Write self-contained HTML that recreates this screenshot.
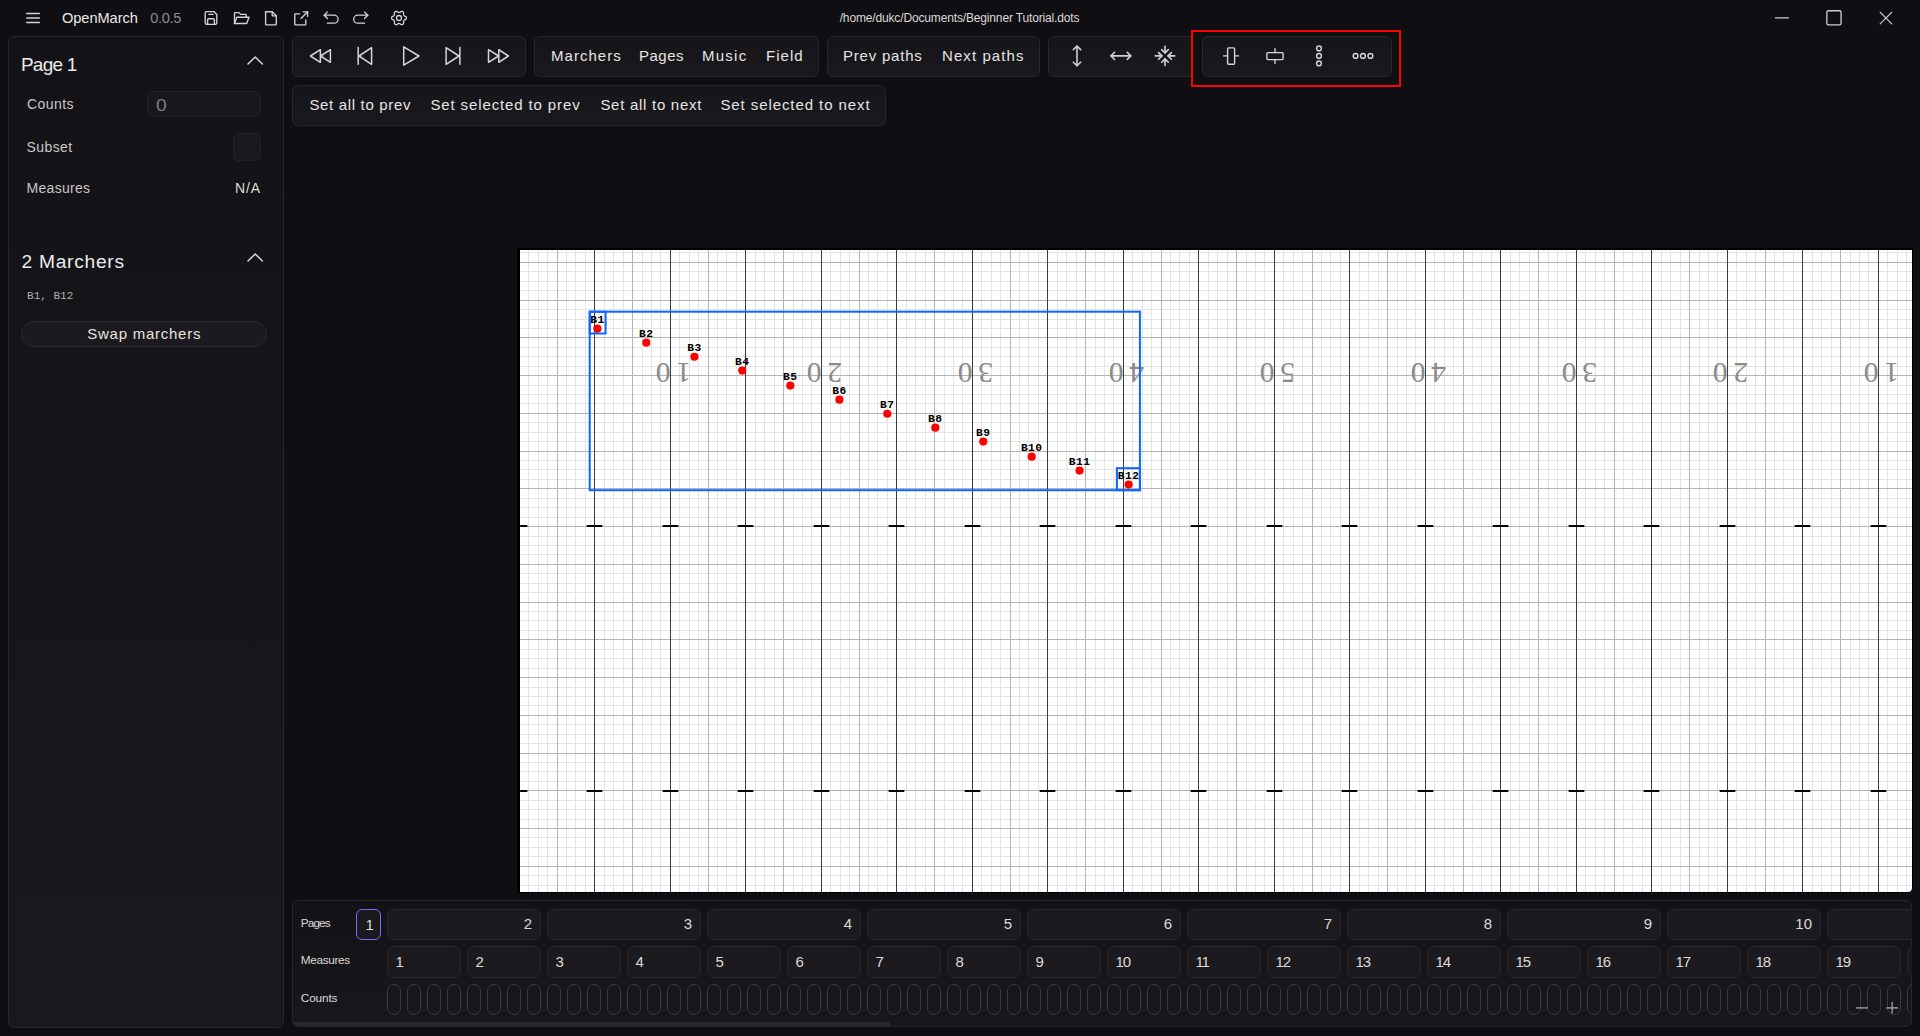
<!DOCTYPE html>
<html><head><meta charset="utf-8">
<style>
*{box-sizing:border-box;margin:0;padding:0}
html,body{width:1920px;height:1036px;overflow:hidden;background:#0f0e13;font-family:"Liberation Sans",sans-serif;color:#e9e7e4}
.abs{position:absolute}
.t{position:absolute;white-space:nowrap;line-height:1}
.panel{position:absolute;background:#16151a;border:1px solid #27262b;border-radius:6px}
svg{position:absolute;overflow:visible}
.ic{fill:none;stroke:#d4d4d4;stroke-width:1.5;stroke-linecap:round;stroke-linejoin:round}
.box{position:absolute;background:#1c1b20;border:1px solid #2a292e;border-radius:6px}
.pill{position:absolute;width:14px;height:30px;border:1px solid #3a393e;border-radius:7px}
</style></head><body>
<svg class="ic" style="left:25px;top:12px;" width="16" height="13" viewBox="0 0 16 13"><path d="M1.8 1.5H14.3M1.8 6.0H14.3M1.8 10.6H14.3"/></svg>
<div class="t" style="left:62.00px;top:10.84px;font-size:14.6px;color:#ebe9e6;letter-spacing:-0.05px;">OpenMarch</div>
<div class="t" style="left:150.20px;top:10.84px;font-size:14.6px;color:#8b8a8f;letter-spacing:-0.35px;">0.0.5</div>
<svg class="ic" style="left:203px;top:10px;stroke-width:1.35" width="16" height="16" viewBox="0 0 16 16"><path d="M2.2 3.2Q2.2 1.6 3.8 1.6H10.9L13.8 4.5V12.8Q13.8 14.4 12.2 14.4H3.8Q2.2 14.4 2.2 12.8Z"/><path d="M4.6 14.2V9.8Q4.6 8.7 5.7 8.7H10.3Q11.4 8.7 11.4 9.8V14.2"/><path d="M5.8 4.3H10.2"/></svg>
<svg class="ic" style="left:233px;top:10px;stroke-width:1.35" width="17" height="16" viewBox="0 0 17 16"><path d="M1.5 13.5V3.2Q1.5 2.6 2.1 2.6H6L7.6 4.4H12.6Q13.2 4.4 13.2 5V7"/><path d="M1.5 13.5L3.8 7.2H16L13.7 13.5Z"/></svg>
<svg class="ic" style="left:263px;top:10px;stroke-width:1.35" width="16" height="16" viewBox="0 0 16 16"><path d="M2.6 1.7H9.2L13.3 5.8V14.3Q13.3 14.9 12.7 14.9H3.2Q2.6 14.9 2.6 14.3Z"/><path d="M9.2 1.7V5.8H13.3"/></svg>
<svg class="ic" style="left:293px;top:10px;stroke-width:1.35" width="16" height="16" viewBox="0 0 16 16"><path d="M6.6 3.8H2.4Q1.8 3.8 1.8 4.4V14.2Q1.8 14.8 2.4 14.8H12.2Q12.8 14.8 12.8 14.2V10"/><path d="M14.6 1.8L8 8.4"/><path d="M10.2 1.8H14.6V6.2"/></svg>
<svg class="ic" style="left:322px;top:10px;stroke-width:1.3" width="17" height="16" viewBox="0 0 17 16"><path d="M5.4 1.9L2.2 5.2L5.4 8.5"/><path d="M2.2 5.2H12.1A4 4 0 0 1 12.1 13.2H5.4"/></svg>
<svg class="ic" style="left:352px;top:10px;stroke-width:1.3" width="17" height="16" viewBox="0 0 17 16"><path d="M12.5 1.9L15.8 5.2L12.5 8.5"/><path d="M15.8 5.2H5.7A4 4 0 0 0 5.7 13.2H12.6"/></svg>
<svg class="ic" style="left:391px;top:10px;stroke-width:1.3" width="16" height="16" viewBox="0 0 16 16"><path d="M15.40 8.00 L15.39 8.19 L15.36 8.39 L15.32 8.58 L15.26 8.76 L15.17 8.94 L15.07 9.12 L14.95 9.29 L14.80 9.44 L14.60 9.59 L14.23 9.67 L13.86 9.73 L13.66 9.84 L13.50 9.95 L13.36 10.06 L13.23 10.17 L13.12 10.28 L13.02 10.39 L12.92 10.51 L12.84 10.63 L12.76 10.75 L12.70 10.88 L12.63 11.01 L12.58 11.15 L12.53 11.29 L12.49 11.45 L12.46 11.61 L12.44 11.79 L12.42 11.98 L12.43 12.20 L12.56 12.56 L12.68 12.93 L12.65 13.16 L12.59 13.37 L12.51 13.56 L12.40 13.74 L12.29 13.90 L12.16 14.05 L12.02 14.18 L11.86 14.30 L11.70 14.41 L11.53 14.50 L11.35 14.57 L11.16 14.63 L10.97 14.66 L10.77 14.68 L10.57 14.68 L10.36 14.66 L10.15 14.61 L9.93 14.51 L9.67 14.23 L9.43 13.94 L9.24 13.82 L9.06 13.74 L8.90 13.67 L8.74 13.62 L8.59 13.57 L8.44 13.54 L8.29 13.52 L8.14 13.50 L8.00 13.50 L7.86 13.50 L7.71 13.52 L7.56 13.54 L7.41 13.57 L7.26 13.62 L7.10 13.67 L6.94 13.74 L6.76 13.82 L6.57 13.94 L6.33 14.23 L6.07 14.51 L5.85 14.61 L5.64 14.66 L5.43 14.68 L5.23 14.68 L5.03 14.66 L4.84 14.63 L4.65 14.57 L4.47 14.50 L4.30 14.41 L4.14 14.30 L3.98 14.18 L3.84 14.05 L3.71 13.90 L3.60 13.74 L3.49 13.56 L3.41 13.37 L3.35 13.16 L3.32 12.93 L3.44 12.56 L3.57 12.20 L3.58 11.98 L3.56 11.79 L3.54 11.61 L3.51 11.45 L3.47 11.29 L3.42 11.15 L3.37 11.01 L3.30 10.88 L3.24 10.75 L3.16 10.63 L3.08 10.51 L2.98 10.39 L2.88 10.28 L2.77 10.17 L2.64 10.06 L2.50 9.95 L2.34 9.84 L2.14 9.73 L1.77 9.67 L1.40 9.59 L1.20 9.44 L1.05 9.29 L0.93 9.12 L0.83 8.94 L0.74 8.76 L0.68 8.58 L0.64 8.39 L0.61 8.19 L0.60 8.00 L0.61 7.81 L0.64 7.61 L0.68 7.42 L0.74 7.24 L0.83 7.06 L0.93 6.88 L1.05 6.71 L1.20 6.56 L1.40 6.41 L1.77 6.33 L2.14 6.27 L2.34 6.16 L2.50 6.05 L2.64 5.94 L2.77 5.83 L2.88 5.72 L2.98 5.61 L3.08 5.49 L3.16 5.37 L3.24 5.25 L3.30 5.12 L3.37 4.99 L3.42 4.85 L3.47 4.71 L3.51 4.55 L3.54 4.39 L3.56 4.21 L3.58 4.02 L3.57 3.80 L3.44 3.44 L3.32 3.07 L3.35 2.84 L3.41 2.63 L3.49 2.44 L3.60 2.26 L3.71 2.10 L3.84 1.95 L3.98 1.82 L4.14 1.70 L4.30 1.59 L4.47 1.50 L4.65 1.43 L4.84 1.37 L5.03 1.34 L5.23 1.32 L5.43 1.32 L5.64 1.34 L5.85 1.39 L6.07 1.49 L6.33 1.77 L6.57 2.06 L6.76 2.18 L6.94 2.26 L7.10 2.33 L7.26 2.38 L7.41 2.43 L7.56 2.46 L7.71 2.48 L7.86 2.50 L8.00 2.50 L8.14 2.50 L8.29 2.48 L8.44 2.46 L8.59 2.43 L8.74 2.38 L8.90 2.33 L9.06 2.26 L9.24 2.18 L9.43 2.06 L9.67 1.77 L9.93 1.49 L10.15 1.39 L10.36 1.34 L10.57 1.32 L10.77 1.32 L10.97 1.34 L11.16 1.37 L11.35 1.43 L11.53 1.50 L11.70 1.59 L11.86 1.70 L12.02 1.82 L12.16 1.95 L12.29 2.10 L12.40 2.26 L12.51 2.44 L12.59 2.63 L12.65 2.84 L12.68 3.07 L12.56 3.44 L12.43 3.80 L12.42 4.02 L12.44 4.21 L12.46 4.39 L12.49 4.55 L12.53 4.71 L12.58 4.85 L12.63 4.99 L12.70 5.12 L12.76 5.25 L12.84 5.37 L12.92 5.49 L13.02 5.61 L13.12 5.72 L13.23 5.83 L13.36 5.94 L13.50 6.05 L13.66 6.16 L13.86 6.27 L14.23 6.33 L14.60 6.41 L14.80 6.56 L14.95 6.71 L15.07 6.88 L15.17 7.06 L15.26 7.24 L15.32 7.42 L15.36 7.61 L15.39 7.81Z"/><circle cx="8" cy="8" r="2.5"/></svg>
<div class="t" style="left:839.70px;top:11.74px;font-size:12px;color:#dcdad7;letter-spacing:-0.15px;">/home/dukc/Documents/Beginner Tutorial.dots</div>
<svg class="ic" style="left:1770px;top:10px;stroke:#cfcfcf;stroke-width:1.2" width="24" height="16" viewBox="0 0 24 16"><path d="M5.3 7.8H18.6"/></svg>
<svg class="ic" style="left:1822px;top:6px;stroke:#cfcfcf;stroke-width:1.3" width="24" height="24" viewBox="0 0 24 24"><rect x="4.85" y="4.75" width="14.2" height="14.1" rx="1.6"/></svg>
<svg class="ic" style="left:1874px;top:6px;stroke:#d0d0d0;stroke-width:1.1" width="24" height="24" viewBox="0 0 24 24"><path d="M6.15 6.25L17.75 17.85M17.75 6.25L6.15 17.85"/></svg>
<div class="panel" style="left:8px;top:36px;width:276px;height:992px;background:linear-gradient(#131217,#19181d)"></div>
<div class="t" style="left:20.90px;top:54.92px;font-size:19px;color:#ecebe8;letter-spacing:-0.75px;">Page 1</div>
<svg class="ic" style="left:247px;top:55px;stroke:#d8d8d8;stroke-width:1.5" width="17" height="11" viewBox="0 0 17 10"><path d="M1 8.5L8.2 1.5L15.4 8.5"/></svg>
<div class="t" style="left:27.00px;top:96.95px;font-size:14px;color:#c9c7c4;letter-spacing:0.45px;">Counts</div>
<div class="abs" style="left:146.8px;top:90.8px;width:114px;height:26.2px;background:#18171c;border:1px solid #222126;border-radius:5px"></div>
<div class="t" style="left:156.3px;top:97.5px;font-size:16px;color:#7d7c80;transform:scaleX(1.2);transform-origin:0 0">0</div>
<div class="t" style="left:26.60px;top:140.45px;font-size:14px;color:#c9c7c4;letter-spacing:0.4px;">Subset</div>
<div class="abs" style="left:233px;top:133.2px;width:27.8px;height:27.6px;background:#1a191e;border:1px solid #222126;border-radius:5px"></div>
<div class="t" style="left:26.60px;top:180.85px;font-size:14px;color:#c9c7c4;letter-spacing:0.28px;">Measures</div>
<div class="t" style="right:1659.00px;top:180.85px;font-size:14px;color:#dedcd9;letter-spacing:0.9px;">N/A</div>
<div class="t" style="left:21.40px;top:251.85px;font-size:19.2px;color:#ecebe8;letter-spacing:0.75px;">2 Marchers</div>
<svg class="ic" style="left:247px;top:252px;stroke:#d8d8d8;stroke-width:1.5" width="17" height="11" viewBox="0 0 17 10"><path d="M1 8.5L8.2 1.5L15.4 8.5"/></svg>
<div class="t" style="left:27.1px;top:291px;font-family:'Liberation Mono',monospace;font-size:11px;color:#b4b2af">B1, B12</div>
<div class="abs" style="left:21.3px;top:321.1px;width:245.5px;height:25.8px;background:#1b1a1f;border:1px solid #2b2a2f;border-radius:13px"></div>
<div class="t" style="left:144.20px;top:325.80px;font-size:15px;color:#e6e4e1;letter-spacing:0.75px;transform:translateX(-50%);">Swap marchers</div>
<div class="panel" style="left:292.3px;top:36.1px;width:233.7px;height:40.699999999999996px;background:linear-gradient(#16151a,#19181d)"></div>
<div class="panel" style="left:534.1px;top:36.1px;width:284.5px;height:40.699999999999996px;background:linear-gradient(#16151a,#19181d)"></div>
<div class="panel" style="left:826.9px;top:36.1px;width:212.80000000000007px;height:40.699999999999996px;background:linear-gradient(#16151a,#19181d)"></div>
<div class="panel" style="left:1048.3px;top:36.1px;width:144.7px;height:40.7px;background:linear-gradient(#16151a,#19181d);border-radius:6px 2px 2px 6px"></div>
<div class="panel" style="left:1202.4px;top:36.1px;width:189.69999999999982px;height:40.699999999999996px;background:linear-gradient(#16151a,#19181d)"></div>
<div class="panel" style="left:292.3px;top:85.2px;width:593.9000000000001px;height:40.39999999999999px;background:linear-gradient(#16151a,#19181d)"></div>
<svg class="ic" style="left:0;top:0;stroke:#d6d6d6;stroke-width:1.5" width="1920" height="130" viewBox="0 0 1920 130"><path d="M310.4 56L320.4 49.7V62.3Z"/><path d="M320.6 56L330.4 49.7V62.3Z"/><path d="M358.2 47.4V64.3"/><path d="M359 56L371.6 47.7V64.3Z"/><path d="M403.7 46.9V65.2L419 56Z"/><path d="M446.1 47.7V64.3L459 56Z"/><path d="M459.9 47.4V64.3"/><path d="M488.5 49.7V62.3L498.6 56Z"/><path d="M498.8 49.7V62.3L508.4 56Z"/></svg>
<svg class="ic" style="left:0;top:0;stroke:#d2d2d2;stroke-width:1.6" width="1920" height="130" viewBox="0 0 1920 130"><path d="M1077 46.2V65.6"/><path d="M1073.4 49.6L1077 46L1080.6 49.6"/><path d="M1073.4 62.2L1077 65.8L1080.6 62.2"/><path d="M1111.2 55.9H1130.6"/><path d="M1114.6 52.3L1111 55.9L1114.6 59.5"/><path d="M1127.2 52.3L1130.8 55.9L1127.2 59.5"/><path d="M1165 46.2V52.8"/><path d="M1161.7 49.6L1165 52.9L1168.3 49.6"/><path d="M1165 65.6V59"/><path d="M1161.7 62.2L1165 58.9L1168.3 62.2"/><path d="M1155.3 55.9H1161.9"/><path d="M1158.6 52.6L1161.9 55.9L1158.6 59.2"/><path d="M1174.7 55.9H1168.1"/><path d="M1171.4 52.6L1168.1 55.9L1171.4 59.2"/></svg>
<svg class="ic" style="left:0;top:0;stroke:#d6d6d6;stroke-width:1.4" width="1920" height="130" viewBox="0 0 1920 130"><rect x="1227.6" y="47.9" width="7" height="16.4" rx="1"/><path d="M1223.6 55.9H1227.6M1234.6 55.9H1238.6"/><rect x="1266.9" y="52.6" width="16.2" height="7" rx="1"/><path d="M1275 48.6V52.6M1275 59.6V63.6"/><circle cx="1319" cy="48.4" r="2.4"/><circle cx="1319" cy="55.9" r="2.4"/><circle cx="1319" cy="63.4" r="2.4"/><circle cx="1355.6" cy="55.9" r="2.4"/><circle cx="1363" cy="55.9" r="2.4"/><circle cx="1370.4" cy="55.9" r="2.4"/></svg>
<div class="t" style="left:551.00px;top:48.30px;font-size:15px;color:#e6e4e1;letter-spacing:1.04px;">Marchers</div>
<div class="t" style="left:639.00px;top:48.30px;font-size:15px;color:#e6e4e1;letter-spacing:0.5px;">Pages</div>
<div class="t" style="left:702.00px;top:48.30px;font-size:15px;color:#e6e4e1;letter-spacing:1.25px;">Music</div>
<div class="t" style="left:766.00px;top:48.30px;font-size:15px;color:#e6e4e1;letter-spacing:1.05px;">Field</div>
<div class="t" style="left:843.00px;top:48.30px;font-size:15px;color:#e6e4e1;letter-spacing:0.79px;">Prev paths</div>
<div class="t" style="left:942.00px;top:48.30px;font-size:15px;color:#e6e4e1;letter-spacing:1.08px;">Next paths</div>
<div class="t" style="left:309.40px;top:97.20px;font-size:15px;color:#e6e4e1;letter-spacing:0.67px;">Set all to prev</div>
<div class="t" style="left:430.40px;top:97.20px;font-size:15px;color:#e6e4e1;letter-spacing:0.88px;">Set selected to prev</div>
<div class="t" style="left:600.40px;top:97.20px;font-size:15px;color:#e6e4e1;letter-spacing:0.72px;">Set all to next</div>
<div class="t" style="left:720.40px;top:97.20px;font-size:15px;color:#e6e4e1;letter-spacing:0.92px;">Set selected to next</div>
<div class="abs" style="left:517px;top:248px;width:1396px;height:645px;overflow:hidden;border-radius:0 0 6px 0"><svg style="left:0;top:0" width="1396" height="645" viewBox="0 0 1396 645"><rect x="0" y="0" width="1396" height="645" fill="#000"/><path d="M3 2H1395V639.5Q1395 644 1390.5 644H3Z" fill="#fff"/><path d="M11.5 2V644M21.5 2V644M30.5 2V644M49.5 2V644M58.5 2V644M68.5 2V644M87.5 2V644M96.5 2V644M106.5 2V644M125.5 2V644M134.5 2V644M143.5 2V644M162.5 2V644M172.5 2V644M181.5 2V644M200.5 2V644M209.5 2V644M219.5 2V644M238.5 2V644M247.5 2V644M257.5 2V644M276.5 2V644M285.5 2V644M294.5 2V644M313.5 2V644M323.5 2V644M332.5 2V644M351.5 2V644M360.5 2V644M370.5 2V644M389.5 2V644M398.5 2V644M408.5 2V644M427.5 2V644M436.5 2V644M445.5 2V644M464.5 2V644M474.5 2V644M483.5 2V644M502.5 2V644M511.5 2V644M521.5 2V644M540.5 2V644M549.5 2V644M559.5 2V644M578.5 2V644M587.5 2V644M596.5 2V644M615.5 2V644M625.5 2V644M634.5 2V644M653.5 2V644M662.5 2V644M672.5 2V644M691.5 2V644M700.5 2V644M710.5 2V644M729.5 2V644M738.5 2V644M747.5 2V644M766.5 2V644M776.5 2V644M785.5 2V644M804.5 2V644M813.5 2V644M823.5 2V644M842.5 2V644M851.5 2V644M861.5 2V644M880.5 2V644M889.5 2V644M898.5 2V644M917.5 2V644M927.5 2V644M936.5 2V644M955.5 2V644M964.5 2V644M974.5 2V644M993.5 2V644M1002.5 2V644M1012.5 2V644M1031.5 2V644M1040.5 2V644M1049.5 2V644M1068.5 2V644M1078.5 2V644M1087.5 2V644M1106.5 2V644M1115.5 2V644M1125.5 2V644M1144.5 2V644M1153.5 2V644M1163.5 2V644M1182.5 2V644M1191.5 2V644M1200.5 2V644M1219.5 2V644M1229.5 2V644M1238.5 2V644M1257.5 2V644M1266.5 2V644M1276.5 2V644M1295.5 2V644M1304.5 2V644M1314.5 2V644M1333.5 2V644M1342.5 2V644M1351.5 2V644M1370.5 2V644M1380.5 2V644M1389.5 2V644M3 4.5H1395M3 23.5H1395M3 33.5H1395M3 42.5H1395M3 61.5H1395M3 71.5H1395M3 80.5H1395M3 99.5H1395M3 108.5H1395M3 118.5H1395M3 137.5H1395M3 146.5H1395M3 155.5H1395M3 174.5H1395M3 184.5H1395M3 193.5H1395M3 212.5H1395M3 221.5H1395M3 231.5H1395M3 250.5H1395M3 259.5H1395M3 269.5H1395M3 288.5H1395M3 297.5H1395M3 306.5H1395M3 325.5H1395M3 335.5H1395M3 344.5H1395M3 363.5H1395M3 372.5H1395M3 382.5H1395M3 401.5H1395M3 410.5H1395M3 420.5H1395M3 439.5H1395M3 448.5H1395M3 457.5H1395M3 476.5H1395M3 486.5H1395M3 495.5H1395M3 514.5H1395M3 523.5H1395M3 533.5H1395M3 552.5H1395M3 561.5H1395M3 571.5H1395M3 589.5H1395M3 599.5H1395M3 608.5H1395M3 627.5H1395M3 637.5H1395" stroke="#e4e4e4" stroke-width="1.0" fill="none" shape-rendering="crispEdges"/><path d="M40.5 2V644M115.5 2V644M191.5 2V644M266.5 2V644M342.5 2V644M417.5 2V644M493.5 2V644M568.5 2V644M644.5 2V644M719.5 2V644M795.5 2V644M870.5 2V644M946.5 2V644M1021.5 2V644M1097.5 2V644M1172.5 2V644M1248.5 2V644M1323.5 2V644M3 14.5H1395M3 52.5H1395M3 89.5H1395M3 127.5H1395M3 165.5H1395M3 203.5H1395M3 240.5H1395M3 278.5H1395M3 316.5H1395M3 354.5H1395M3 391.5H1395M3 429.5H1395M3 467.5H1395M3 505.5H1395M3 542.5H1395M3 580.5H1395M3 618.5H1395" stroke="#b4b4b4" stroke-width="1.0" fill="none" shape-rendering="crispEdges"/><path d="M77.5 2V644M153.5 2V644M228.5 2V644M304.5 2V644M379.5 2V644M455.5 2V644M530.5 2V644M606.5 2V644M681.5 2V644M757.5 2V644M832.5 2V644M908.5 2V644M983.5 2V644M1059.5 2V644M1134.5 2V644M1210.5 2V644M1285.5 2V644M1361.5 2V644" stroke="#3c3c3c" stroke-width="1.0" fill="none" shape-rendering="crispEdges"/><rect x="3.0" y="277" width="7.5" height="2" rx="0.8" fill="#000"/><rect x="3.0" y="542" width="7.5" height="2" rx="0.8" fill="#000"/><rect x="69.5" y="277" width="16.0" height="2" rx="0.8" fill="#000"/><rect x="69.5" y="542" width="16.0" height="2" rx="0.8" fill="#000"/><rect x="145.5" y="277" width="16.0" height="2" rx="0.8" fill="#000"/><rect x="145.5" y="542" width="16.0" height="2" rx="0.8" fill="#000"/><rect x="220.5" y="277" width="16.0" height="2" rx="0.8" fill="#000"/><rect x="220.5" y="542" width="16.0" height="2" rx="0.8" fill="#000"/><rect x="296.5" y="277" width="16.0" height="2" rx="0.8" fill="#000"/><rect x="296.5" y="542" width="16.0" height="2" rx="0.8" fill="#000"/><rect x="371.5" y="277" width="16.0" height="2" rx="0.8" fill="#000"/><rect x="371.5" y="542" width="16.0" height="2" rx="0.8" fill="#000"/><rect x="447.5" y="277" width="16.0" height="2" rx="0.8" fill="#000"/><rect x="447.5" y="542" width="16.0" height="2" rx="0.8" fill="#000"/><rect x="522.5" y="277" width="16.0" height="2" rx="0.8" fill="#000"/><rect x="522.5" y="542" width="16.0" height="2" rx="0.8" fill="#000"/><rect x="598.5" y="277" width="16.0" height="2" rx="0.8" fill="#000"/><rect x="598.5" y="542" width="16.0" height="2" rx="0.8" fill="#000"/><rect x="673.5" y="277" width="16.0" height="2" rx="0.8" fill="#000"/><rect x="673.5" y="542" width="16.0" height="2" rx="0.8" fill="#000"/><rect x="749.5" y="277" width="16.0" height="2" rx="0.8" fill="#000"/><rect x="749.5" y="542" width="16.0" height="2" rx="0.8" fill="#000"/><rect x="824.5" y="277" width="16.0" height="2" rx="0.8" fill="#000"/><rect x="824.5" y="542" width="16.0" height="2" rx="0.8" fill="#000"/><rect x="900.5" y="277" width="16.0" height="2" rx="0.8" fill="#000"/><rect x="900.5" y="542" width="16.0" height="2" rx="0.8" fill="#000"/><rect x="975.5" y="277" width="16.0" height="2" rx="0.8" fill="#000"/><rect x="975.5" y="542" width="16.0" height="2" rx="0.8" fill="#000"/><rect x="1051.5" y="277" width="16.0" height="2" rx="0.8" fill="#000"/><rect x="1051.5" y="542" width="16.0" height="2" rx="0.8" fill="#000"/><rect x="1126.5" y="277" width="16.0" height="2" rx="0.8" fill="#000"/><rect x="1126.5" y="542" width="16.0" height="2" rx="0.8" fill="#000"/><rect x="1202.5" y="277" width="16.0" height="2" rx="0.8" fill="#000"/><rect x="1202.5" y="542" width="16.0" height="2" rx="0.8" fill="#000"/><rect x="1277.5" y="277" width="16.0" height="2" rx="0.8" fill="#000"/><rect x="1277.5" y="542" width="16.0" height="2" rx="0.8" fill="#000"/><rect x="1353.5" y="277" width="16.0" height="2" rx="0.8" fill="#000"/><rect x="1353.5" y="542" width="16.0" height="2" rx="0.8" fill="#000"/><text x="166.54" y="124.85" transform="rotate(180 166.54 124.85)" font-family="Liberation Serif" font-size="29.5" fill="#8a8a8a" text-anchor="middle" dy="0.3375em">1</text><text x="146.14" y="124.85" transform="rotate(180 146.14 124.85)" font-family="Liberation Serif" font-size="29.5" fill="#8a8a8a" text-anchor="middle" dy="0.3375em">0</text><text x="317.54" y="124.85" transform="rotate(180 317.54 124.85)" font-family="Liberation Serif" font-size="29.5" fill="#8a8a8a" text-anchor="middle" dy="0.3375em">2</text><text x="297.14" y="124.85" transform="rotate(180 297.14 124.85)" font-family="Liberation Serif" font-size="29.5" fill="#8a8a8a" text-anchor="middle" dy="0.3375em">0</text><text x="468.54" y="124.85" transform="rotate(180 468.54 124.85)" font-family="Liberation Serif" font-size="29.5" fill="#8a8a8a" text-anchor="middle" dy="0.3375em">3</text><text x="448.14" y="124.85" transform="rotate(180 448.14 124.85)" font-family="Liberation Serif" font-size="29.5" fill="#8a8a8a" text-anchor="middle" dy="0.3375em">0</text><text x="619.54" y="124.85" transform="rotate(180 619.54 124.85)" font-family="Liberation Serif" font-size="29.5" fill="#8a8a8a" text-anchor="middle" dy="0.3375em">4</text><text x="599.14" y="124.85" transform="rotate(180 599.14 124.85)" font-family="Liberation Serif" font-size="29.5" fill="#8a8a8a" text-anchor="middle" dy="0.3375em">0</text><text x="770.54" y="124.85" transform="rotate(180 770.54 124.85)" font-family="Liberation Serif" font-size="29.5" fill="#8a8a8a" text-anchor="middle" dy="0.3375em">5</text><text x="750.14" y="124.85" transform="rotate(180 750.14 124.85)" font-family="Liberation Serif" font-size="29.5" fill="#8a8a8a" text-anchor="middle" dy="0.3375em">0</text><text x="921.54" y="124.85" transform="rotate(180 921.54 124.85)" font-family="Liberation Serif" font-size="29.5" fill="#8a8a8a" text-anchor="middle" dy="0.3375em">4</text><text x="901.14" y="124.85" transform="rotate(180 901.14 124.85)" font-family="Liberation Serif" font-size="29.5" fill="#8a8a8a" text-anchor="middle" dy="0.3375em">0</text><text x="1072.54" y="124.85" transform="rotate(180 1072.54 124.85)" font-family="Liberation Serif" font-size="29.5" fill="#8a8a8a" text-anchor="middle" dy="0.3375em">3</text><text x="1052.14" y="124.85" transform="rotate(180 1052.14 124.85)" font-family="Liberation Serif" font-size="29.5" fill="#8a8a8a" text-anchor="middle" dy="0.3375em">0</text><text x="1223.54" y="124.85" transform="rotate(180 1223.54 124.85)" font-family="Liberation Serif" font-size="29.5" fill="#8a8a8a" text-anchor="middle" dy="0.3375em">2</text><text x="1203.14" y="124.85" transform="rotate(180 1203.14 124.85)" font-family="Liberation Serif" font-size="29.5" fill="#8a8a8a" text-anchor="middle" dy="0.3375em">0</text><text x="1374.54" y="124.85" transform="rotate(180 1374.54 124.85)" font-family="Liberation Serif" font-size="29.5" fill="#8a8a8a" text-anchor="middle" dy="0.3375em">1</text><text x="1354.14" y="124.85" transform="rotate(180 1354.14 124.85)" font-family="Liberation Serif" font-size="29.5" fill="#8a8a8a" text-anchor="middle" dy="0.3375em">0</text><text x="80.40" y="75.10" font-family="Liberation Mono" font-weight="bold" font-size="11.3" letter-spacing="0.4" fill="#000" text-anchor="middle">B1</text><circle cx="80.40" cy="80.70" r="4.1" fill="#ff0000"/><text x="129.30" y="89.10" font-family="Liberation Mono" font-weight="bold" font-size="11.3" letter-spacing="0.4" fill="#000" text-anchor="middle">B2</text><circle cx="129.30" cy="94.70" r="4.1" fill="#ff0000"/><text x="177.40" y="103.15" font-family="Liberation Mono" font-weight="bold" font-size="11.3" letter-spacing="0.4" fill="#000" text-anchor="middle">B3</text><circle cx="177.40" cy="108.75" r="4.1" fill="#ff0000"/><text x="225.20" y="117.00" font-family="Liberation Mono" font-weight="bold" font-size="11.3" letter-spacing="0.4" fill="#000" text-anchor="middle">B4</text><circle cx="225.20" cy="122.60" r="4.1" fill="#ff0000"/><text x="273.30" y="132.00" font-family="Liberation Mono" font-weight="bold" font-size="11.3" letter-spacing="0.4" fill="#000" text-anchor="middle">B5</text><circle cx="273.30" cy="137.60" r="4.1" fill="#ff0000"/><text x="322.40" y="146.10" font-family="Liberation Mono" font-weight="bold" font-size="11.3" letter-spacing="0.4" fill="#000" text-anchor="middle">B6</text><circle cx="322.40" cy="151.70" r="4.1" fill="#ff0000"/><text x="370.30" y="160.15" font-family="Liberation Mono" font-weight="bold" font-size="11.3" letter-spacing="0.4" fill="#000" text-anchor="middle">B7</text><circle cx="370.30" cy="165.75" r="4.1" fill="#ff0000"/><text x="418.30" y="174.10" font-family="Liberation Mono" font-weight="bold" font-size="11.3" letter-spacing="0.4" fill="#000" text-anchor="middle">B8</text><circle cx="418.30" cy="179.70" r="4.1" fill="#ff0000"/><text x="466.25" y="188.00" font-family="Liberation Mono" font-weight="bold" font-size="11.3" letter-spacing="0.4" fill="#000" text-anchor="middle">B9</text><circle cx="466.25" cy="193.60" r="4.1" fill="#ff0000"/><text x="514.70" y="203.10" font-family="Liberation Mono" font-weight="bold" font-size="11.3" letter-spacing="0.4" fill="#000" text-anchor="middle">B10</text><circle cx="514.70" cy="208.70" r="4.1" fill="#ff0000"/><text x="562.60" y="217.00" font-family="Liberation Mono" font-weight="bold" font-size="11.3" letter-spacing="0.4" fill="#000" text-anchor="middle">B11</text><circle cx="562.60" cy="222.60" r="4.1" fill="#ff0000"/><text x="611.60" y="231.00" font-family="Liberation Mono" font-weight="bold" font-size="11.3" letter-spacing="0.4" fill="#000" text-anchor="middle">B12</text><circle cx="611.60" cy="236.60" r="4.1" fill="#ff0000"/><rect x="72.70" y="63.70" width="550.20" height="178.50" fill="none" stroke="#0a66ff" stroke-width="2"/><rect x="72.70" y="63.70" width="15.90" height="21.80" fill="none" stroke="#0a66ff" stroke-width="2"/><rect x="599.90" y="220.20" width="23.00" height="22.00" fill="none" stroke="#0a66ff" stroke-width="2"/></svg></div>
<div class="panel" style="left:292.4px;top:900px;width:1619.4px;height:127.3px;background:linear-gradient(#131217,#18171c);overflow:hidden"><div class="abs" style="left:0;bottom:0;width:597px;height:4.5px;background:#2a292e;border-radius:0 3px 0 6px"></div></div>
<div class="t" style="left:300.80px;top:918.31px;font-size:11.8px;color:#dcdad7;letter-spacing:-0.9px;">Pages</div>
<div class="t" style="left:300.80px;top:955.41px;font-size:11.8px;color:#dcdad7;letter-spacing:-0.34px;">Measures</div>
<div class="t" style="left:300.80px;top:993.31px;font-size:11.8px;color:#dcdad7;letter-spacing:-0.14px;">Counts</div>
<div class="abs" style="left:292.4px;top:900px;width:1619.4px;height:127.3px;overflow:hidden;border-radius:6px"><div class="abs" style="left:63.6px;top:9.0px;width:25px;height:31px;background:#1a191e;border:1.5px solid #7b6cf2;border-radius:6px"></div><div class="t" style="left:73.2px;top:16.9px;font-size:15px;color:#e0dedb">1</div><div class="abs" style="left:94.9px;top:9.0px;width:153.7px;height:31px;background:#1b1a1f;border:1px solid #29282d;border-radius:7px"></div><div class="t" style="right:1379.8px;top:16.2px;font-size:15px;color:#dedcd9">2</div><div class="abs" style="left:254.9px;top:9.0px;width:153.7px;height:31px;background:#1b1a1f;border:1px solid #29282d;border-radius:7px"></div><div class="t" style="right:1219.8px;top:16.2px;font-size:15px;color:#dedcd9">3</div><div class="abs" style="left:414.9px;top:9.0px;width:153.7px;height:31px;background:#1b1a1f;border:1px solid #29282d;border-radius:7px"></div><div class="t" style="right:1059.8px;top:16.2px;font-size:15px;color:#dedcd9">4</div><div class="abs" style="left:574.9px;top:9.0px;width:153.7px;height:31px;background:#1b1a1f;border:1px solid #29282d;border-radius:7px"></div><div class="t" style="right:899.8px;top:16.2px;font-size:15px;color:#dedcd9">5</div><div class="abs" style="left:734.9px;top:9.0px;width:153.7px;height:31px;background:#1b1a1f;border:1px solid #29282d;border-radius:7px"></div><div class="t" style="right:739.8px;top:16.2px;font-size:15px;color:#dedcd9">6</div><div class="abs" style="left:894.9px;top:9.0px;width:153.7px;height:31px;background:#1b1a1f;border:1px solid #29282d;border-radius:7px"></div><div class="t" style="right:579.8px;top:16.2px;font-size:15px;color:#dedcd9">7</div><div class="abs" style="left:1054.9px;top:9.0px;width:153.7px;height:31px;background:#1b1a1f;border:1px solid #29282d;border-radius:7px"></div><div class="t" style="right:419.8px;top:16.2px;font-size:15px;color:#dedcd9">8</div><div class="abs" style="left:1214.9px;top:9.0px;width:153.7px;height:31px;background:#1b1a1f;border:1px solid #29282d;border-radius:7px"></div><div class="t" style="right:259.8px;top:16.2px;font-size:15px;color:#dedcd9">9</div><div class="abs" style="left:1374.9px;top:9.0px;width:153.7px;height:31px;background:#1b1a1f;border:1px solid #29282d;border-radius:7px"></div><div class="t" style="right:99.8px;top:16.2px;font-size:15px;color:#dedcd9">10</div><div class="abs" style="left:1534.9px;top:9.0px;width:153.7px;height:31px;background:#1b1a1f;border:1px solid #29282d;border-radius:7px"></div><div class="t" style="right:-60.2px;top:16.2px;font-size:15px;color:#dedcd9">11</div><div class="abs" style="left:94.9px;top:46.3px;width:73.6px;height:32px;background:#1b1a1f;border:1px solid #29282d;border-radius:7px"></div><div class="t" style="left:103.0px;top:54.2px;font-size:15px;letter-spacing:-1px;color:#dedcd9">1</div><div class="abs" style="left:174.9px;top:46.3px;width:73.6px;height:32px;background:#1b1a1f;border:1px solid #29282d;border-radius:7px"></div><div class="t" style="left:183.0px;top:54.2px;font-size:15px;letter-spacing:-1px;color:#dedcd9">2</div><div class="abs" style="left:254.9px;top:46.3px;width:73.6px;height:32px;background:#1b1a1f;border:1px solid #29282d;border-radius:7px"></div><div class="t" style="left:263.0px;top:54.2px;font-size:15px;letter-spacing:-1px;color:#dedcd9">3</div><div class="abs" style="left:334.9px;top:46.3px;width:73.6px;height:32px;background:#1b1a1f;border:1px solid #29282d;border-radius:7px"></div><div class="t" style="left:343.0px;top:54.2px;font-size:15px;letter-spacing:-1px;color:#dedcd9">4</div><div class="abs" style="left:414.9px;top:46.3px;width:73.6px;height:32px;background:#1b1a1f;border:1px solid #29282d;border-radius:7px"></div><div class="t" style="left:423.0px;top:54.2px;font-size:15px;letter-spacing:-1px;color:#dedcd9">5</div><div class="abs" style="left:494.9px;top:46.3px;width:73.6px;height:32px;background:#1b1a1f;border:1px solid #29282d;border-radius:7px"></div><div class="t" style="left:503.0px;top:54.2px;font-size:15px;letter-spacing:-1px;color:#dedcd9">6</div><div class="abs" style="left:574.9px;top:46.3px;width:73.6px;height:32px;background:#1b1a1f;border:1px solid #29282d;border-radius:7px"></div><div class="t" style="left:583.0px;top:54.2px;font-size:15px;letter-spacing:-1px;color:#dedcd9">7</div><div class="abs" style="left:654.9px;top:46.3px;width:73.6px;height:32px;background:#1b1a1f;border:1px solid #29282d;border-radius:7px"></div><div class="t" style="left:663.0px;top:54.2px;font-size:15px;letter-spacing:-1px;color:#dedcd9">8</div><div class="abs" style="left:734.9px;top:46.3px;width:73.6px;height:32px;background:#1b1a1f;border:1px solid #29282d;border-radius:7px"></div><div class="t" style="left:743.0px;top:54.2px;font-size:15px;letter-spacing:-1px;color:#dedcd9">9</div><div class="abs" style="left:814.9px;top:46.3px;width:73.6px;height:32px;background:#1b1a1f;border:1px solid #29282d;border-radius:7px"></div><div class="t" style="left:823.0px;top:54.2px;font-size:15px;letter-spacing:-1px;color:#dedcd9">10</div><div class="abs" style="left:894.9px;top:46.3px;width:73.6px;height:32px;background:#1b1a1f;border:1px solid #29282d;border-radius:7px"></div><div class="t" style="left:903.0px;top:54.2px;font-size:15px;letter-spacing:-1px;color:#dedcd9">11</div><div class="abs" style="left:974.9px;top:46.3px;width:73.6px;height:32px;background:#1b1a1f;border:1px solid #29282d;border-radius:7px"></div><div class="t" style="left:983.0px;top:54.2px;font-size:15px;letter-spacing:-1px;color:#dedcd9">12</div><div class="abs" style="left:1054.9px;top:46.3px;width:73.6px;height:32px;background:#1b1a1f;border:1px solid #29282d;border-radius:7px"></div><div class="t" style="left:1063.0px;top:54.2px;font-size:15px;letter-spacing:-1px;color:#dedcd9">13</div><div class="abs" style="left:1134.9px;top:46.3px;width:73.6px;height:32px;background:#1b1a1f;border:1px solid #29282d;border-radius:7px"></div><div class="t" style="left:1143.0px;top:54.2px;font-size:15px;letter-spacing:-1px;color:#dedcd9">14</div><div class="abs" style="left:1214.9px;top:46.3px;width:73.6px;height:32px;background:#1b1a1f;border:1px solid #29282d;border-radius:7px"></div><div class="t" style="left:1223.0px;top:54.2px;font-size:15px;letter-spacing:-1px;color:#dedcd9">15</div><div class="abs" style="left:1294.9px;top:46.3px;width:73.6px;height:32px;background:#1b1a1f;border:1px solid #29282d;border-radius:7px"></div><div class="t" style="left:1303.0px;top:54.2px;font-size:15px;letter-spacing:-1px;color:#dedcd9">16</div><div class="abs" style="left:1374.9px;top:46.3px;width:73.6px;height:32px;background:#1b1a1f;border:1px solid #29282d;border-radius:7px"></div><div class="t" style="left:1383.0px;top:54.2px;font-size:15px;letter-spacing:-1px;color:#dedcd9">17</div><div class="abs" style="left:1454.9px;top:46.3px;width:73.6px;height:32px;background:#1b1a1f;border:1px solid #29282d;border-radius:7px"></div><div class="t" style="left:1463.0px;top:54.2px;font-size:15px;letter-spacing:-1px;color:#dedcd9">18</div><div class="abs" style="left:1534.9px;top:46.3px;width:73.6px;height:32px;background:#1b1a1f;border:1px solid #29282d;border-radius:7px"></div><div class="t" style="left:1543.0px;top:54.2px;font-size:15px;letter-spacing:-1px;color:#dedcd9">19</div><div class="abs" style="left:1614.9px;top:46.3px;width:73.6px;height:32px;background:#1b1a1f;border:1px solid #29282d;border-radius:7px"></div><div class="t" style="left:1623.0px;top:54.2px;font-size:15px;letter-spacing:-1px;color:#dedcd9">20</div><div class="abs" style="left:94.7px;top:84.4px;width:14px;height:30.6px;border:1px solid #3b3a3f;border-radius:7px"></div><div class="abs" style="left:114.7px;top:84.4px;width:14px;height:30.6px;border:1px solid #3b3a3f;border-radius:7px"></div><div class="abs" style="left:134.7px;top:84.4px;width:14px;height:30.6px;border:1px solid #3b3a3f;border-radius:7px"></div><div class="abs" style="left:154.7px;top:84.4px;width:14px;height:30.6px;border:1px solid #3b3a3f;border-radius:7px"></div><div class="abs" style="left:174.7px;top:84.4px;width:14px;height:30.6px;border:1px solid #3b3a3f;border-radius:7px"></div><div class="abs" style="left:194.7px;top:84.4px;width:14px;height:30.6px;border:1px solid #3b3a3f;border-radius:7px"></div><div class="abs" style="left:214.7px;top:84.4px;width:14px;height:30.6px;border:1px solid #3b3a3f;border-radius:7px"></div><div class="abs" style="left:234.7px;top:84.4px;width:14px;height:30.6px;border:1px solid #3b3a3f;border-radius:7px"></div><div class="abs" style="left:254.7px;top:84.4px;width:14px;height:30.6px;border:1px solid #3b3a3f;border-radius:7px"></div><div class="abs" style="left:274.7px;top:84.4px;width:14px;height:30.6px;border:1px solid #3b3a3f;border-radius:7px"></div><div class="abs" style="left:294.7px;top:84.4px;width:14px;height:30.6px;border:1px solid #3b3a3f;border-radius:7px"></div><div class="abs" style="left:314.7px;top:84.4px;width:14px;height:30.6px;border:1px solid #3b3a3f;border-radius:7px"></div><div class="abs" style="left:334.7px;top:84.4px;width:14px;height:30.6px;border:1px solid #3b3a3f;border-radius:7px"></div><div class="abs" style="left:354.7px;top:84.4px;width:14px;height:30.6px;border:1px solid #3b3a3f;border-radius:7px"></div><div class="abs" style="left:374.7px;top:84.4px;width:14px;height:30.6px;border:1px solid #3b3a3f;border-radius:7px"></div><div class="abs" style="left:394.7px;top:84.4px;width:14px;height:30.6px;border:1px solid #3b3a3f;border-radius:7px"></div><div class="abs" style="left:414.7px;top:84.4px;width:14px;height:30.6px;border:1px solid #3b3a3f;border-radius:7px"></div><div class="abs" style="left:434.7px;top:84.4px;width:14px;height:30.6px;border:1px solid #3b3a3f;border-radius:7px"></div><div class="abs" style="left:454.7px;top:84.4px;width:14px;height:30.6px;border:1px solid #3b3a3f;border-radius:7px"></div><div class="abs" style="left:474.7px;top:84.4px;width:14px;height:30.6px;border:1px solid #3b3a3f;border-radius:7px"></div><div class="abs" style="left:494.7px;top:84.4px;width:14px;height:30.6px;border:1px solid #3b3a3f;border-radius:7px"></div><div class="abs" style="left:514.7px;top:84.4px;width:14px;height:30.6px;border:1px solid #3b3a3f;border-radius:7px"></div><div class="abs" style="left:534.7px;top:84.4px;width:14px;height:30.6px;border:1px solid #3b3a3f;border-radius:7px"></div><div class="abs" style="left:554.7px;top:84.4px;width:14px;height:30.6px;border:1px solid #3b3a3f;border-radius:7px"></div><div class="abs" style="left:574.7px;top:84.4px;width:14px;height:30.6px;border:1px solid #3b3a3f;border-radius:7px"></div><div class="abs" style="left:594.7px;top:84.4px;width:14px;height:30.6px;border:1px solid #3b3a3f;border-radius:7px"></div><div class="abs" style="left:614.7px;top:84.4px;width:14px;height:30.6px;border:1px solid #3b3a3f;border-radius:7px"></div><div class="abs" style="left:634.7px;top:84.4px;width:14px;height:30.6px;border:1px solid #3b3a3f;border-radius:7px"></div><div class="abs" style="left:654.7px;top:84.4px;width:14px;height:30.6px;border:1px solid #3b3a3f;border-radius:7px"></div><div class="abs" style="left:674.7px;top:84.4px;width:14px;height:30.6px;border:1px solid #3b3a3f;border-radius:7px"></div><div class="abs" style="left:694.7px;top:84.4px;width:14px;height:30.6px;border:1px solid #3b3a3f;border-radius:7px"></div><div class="abs" style="left:714.7px;top:84.4px;width:14px;height:30.6px;border:1px solid #3b3a3f;border-radius:7px"></div><div class="abs" style="left:734.7px;top:84.4px;width:14px;height:30.6px;border:1px solid #3b3a3f;border-radius:7px"></div><div class="abs" style="left:754.7px;top:84.4px;width:14px;height:30.6px;border:1px solid #3b3a3f;border-radius:7px"></div><div class="abs" style="left:774.7px;top:84.4px;width:14px;height:30.6px;border:1px solid #3b3a3f;border-radius:7px"></div><div class="abs" style="left:794.7px;top:84.4px;width:14px;height:30.6px;border:1px solid #3b3a3f;border-radius:7px"></div><div class="abs" style="left:814.7px;top:84.4px;width:14px;height:30.6px;border:1px solid #3b3a3f;border-radius:7px"></div><div class="abs" style="left:834.7px;top:84.4px;width:14px;height:30.6px;border:1px solid #3b3a3f;border-radius:7px"></div><div class="abs" style="left:854.7px;top:84.4px;width:14px;height:30.6px;border:1px solid #3b3a3f;border-radius:7px"></div><div class="abs" style="left:874.7px;top:84.4px;width:14px;height:30.6px;border:1px solid #3b3a3f;border-radius:7px"></div><div class="abs" style="left:894.7px;top:84.4px;width:14px;height:30.6px;border:1px solid #3b3a3f;border-radius:7px"></div><div class="abs" style="left:914.7px;top:84.4px;width:14px;height:30.6px;border:1px solid #3b3a3f;border-radius:7px"></div><div class="abs" style="left:934.7px;top:84.4px;width:14px;height:30.6px;border:1px solid #3b3a3f;border-radius:7px"></div><div class="abs" style="left:954.7px;top:84.4px;width:14px;height:30.6px;border:1px solid #3b3a3f;border-radius:7px"></div><div class="abs" style="left:974.7px;top:84.4px;width:14px;height:30.6px;border:1px solid #3b3a3f;border-radius:7px"></div><div class="abs" style="left:994.7px;top:84.4px;width:14px;height:30.6px;border:1px solid #3b3a3f;border-radius:7px"></div><div class="abs" style="left:1014.7px;top:84.4px;width:14px;height:30.6px;border:1px solid #3b3a3f;border-radius:7px"></div><div class="abs" style="left:1034.7px;top:84.4px;width:14px;height:30.6px;border:1px solid #3b3a3f;border-radius:7px"></div><div class="abs" style="left:1054.7px;top:84.4px;width:14px;height:30.6px;border:1px solid #3b3a3f;border-radius:7px"></div><div class="abs" style="left:1074.7px;top:84.4px;width:14px;height:30.6px;border:1px solid #3b3a3f;border-radius:7px"></div><div class="abs" style="left:1094.7px;top:84.4px;width:14px;height:30.6px;border:1px solid #3b3a3f;border-radius:7px"></div><div class="abs" style="left:1114.7px;top:84.4px;width:14px;height:30.6px;border:1px solid #3b3a3f;border-radius:7px"></div><div class="abs" style="left:1134.7px;top:84.4px;width:14px;height:30.6px;border:1px solid #3b3a3f;border-radius:7px"></div><div class="abs" style="left:1154.7px;top:84.4px;width:14px;height:30.6px;border:1px solid #3b3a3f;border-radius:7px"></div><div class="abs" style="left:1174.7px;top:84.4px;width:14px;height:30.6px;border:1px solid #3b3a3f;border-radius:7px"></div><div class="abs" style="left:1194.7px;top:84.4px;width:14px;height:30.6px;border:1px solid #3b3a3f;border-radius:7px"></div><div class="abs" style="left:1214.7px;top:84.4px;width:14px;height:30.6px;border:1px solid #3b3a3f;border-radius:7px"></div><div class="abs" style="left:1234.7px;top:84.4px;width:14px;height:30.6px;border:1px solid #3b3a3f;border-radius:7px"></div><div class="abs" style="left:1254.7px;top:84.4px;width:14px;height:30.6px;border:1px solid #3b3a3f;border-radius:7px"></div><div class="abs" style="left:1274.7px;top:84.4px;width:14px;height:30.6px;border:1px solid #3b3a3f;border-radius:7px"></div><div class="abs" style="left:1294.7px;top:84.4px;width:14px;height:30.6px;border:1px solid #3b3a3f;border-radius:7px"></div><div class="abs" style="left:1314.7px;top:84.4px;width:14px;height:30.6px;border:1px solid #3b3a3f;border-radius:7px"></div><div class="abs" style="left:1334.7px;top:84.4px;width:14px;height:30.6px;border:1px solid #3b3a3f;border-radius:7px"></div><div class="abs" style="left:1354.7px;top:84.4px;width:14px;height:30.6px;border:1px solid #3b3a3f;border-radius:7px"></div><div class="abs" style="left:1374.7px;top:84.4px;width:14px;height:30.6px;border:1px solid #3b3a3f;border-radius:7px"></div><div class="abs" style="left:1394.7px;top:84.4px;width:14px;height:30.6px;border:1px solid #3b3a3f;border-radius:7px"></div><div class="abs" style="left:1414.7px;top:84.4px;width:14px;height:30.6px;border:1px solid #3b3a3f;border-radius:7px"></div><div class="abs" style="left:1434.7px;top:84.4px;width:14px;height:30.6px;border:1px solid #3b3a3f;border-radius:7px"></div><div class="abs" style="left:1454.7px;top:84.4px;width:14px;height:30.6px;border:1px solid #3b3a3f;border-radius:7px"></div><div class="abs" style="left:1474.7px;top:84.4px;width:14px;height:30.6px;border:1px solid #3b3a3f;border-radius:7px"></div><div class="abs" style="left:1494.7px;top:84.4px;width:14px;height:30.6px;border:1px solid #3b3a3f;border-radius:7px"></div><div class="abs" style="left:1514.7px;top:84.4px;width:14px;height:30.6px;border:1px solid #3b3a3f;border-radius:7px"></div><div class="abs" style="left:1534.7px;top:84.4px;width:14px;height:30.6px;border:1px solid #3b3a3f;border-radius:7px"></div><div class="abs" style="left:1554.7px;top:84.4px;width:14px;height:30.6px;border:1px solid #3b3a3f;border-radius:7px"></div><div class="abs" style="left:1574.7px;top:84.4px;width:14px;height:30.6px;border:1px solid #3b3a3f;border-radius:7px"></div><div class="abs" style="left:1594.7px;top:84.4px;width:14px;height:30.6px;border:1px solid #3b3a3f;border-radius:7px"></div><div class="abs" style="left:1614.7px;top:84.4px;width:14px;height:30.6px;border:1px solid #3b3a3f;border-radius:7px"></div><div class="abs" style="left:1634.7px;top:84.4px;width:14px;height:30.6px;border:1px solid #3b3a3f;border-radius:7px"></div></div>
<svg class="ic" style="left:1850px;top:1000px;stroke:#8c8b8f;stroke-width:1.6;stroke-linecap:butt" width="50" height="16" viewBox="0 0 50 16"><path d="M6 7.9H18"/><path d="M36.3 7.9H48M42.15 2V13.5"/></svg>
<div class="abs" style="left:1191px;top:30.2px;width:210px;height:56.6px;border:2.4px solid #ff0000;box-shadow:inset 0 0 0 1px rgba(0,0,0,0.5)"></div>
</body></html>
